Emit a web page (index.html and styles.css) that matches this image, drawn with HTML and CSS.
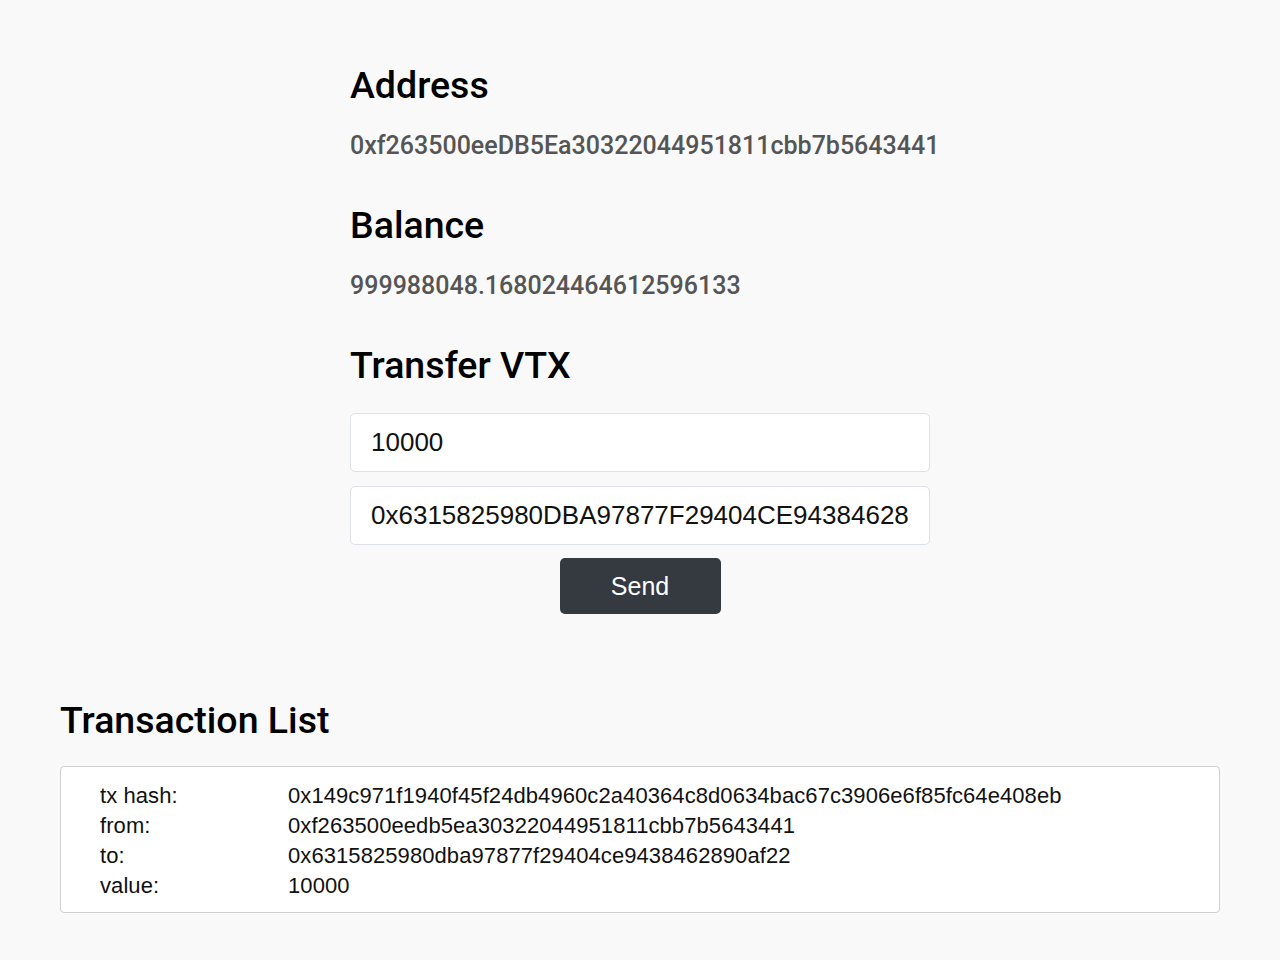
FILE: index.html
```html
<!DOCTYPE html>
<html lang="en">
<head>
<meta charset="utf-8">
<title>Wallet</title>
<link rel="stylesheet" href="styles.css">
</head>
<body>
<main class="page">
  <section class="wallet">
    <h2 class="heading">Address</h2>
    <p class="value">0xf263500eeDB5Ea30322044951811cbb7b5643441</p>
    <h2 class="heading spaced">Balance</h2>
    <p class="value">999988048.168024464612596133</p>
    <h2 class="heading spaced">Transfer VTX</h2>
    <form class="transfer">
      <input class="field" type="text" value="10000">
      <input class="field" type="text" value="0x6315825980DBA97877F29404CE9438462890af22">
      <button class="send" type="button">Send</button>
    </form>
  </section>
  <section class="transactions">
    <h2 class="heading">Transaction List</h2>
    <div class="tx-box">
      <div class="tx-row"><span class="tx-label">tx hash:</span><span class="tx-val">0x149c971f1940f45f24db4960c2a40364c8d0634bac67c3906e6f85fc64e408eb</span></div>
      <div class="tx-row"><span class="tx-label">from:</span><span class="tx-val">0xf263500eedb5ea30322044951811cbb7b5643441</span></div>
      <div class="tx-row"><span class="tx-label">to:</span><span class="tx-val">0x6315825980dba97877f29404ce9438462890af22</span></div>
      <div class="tx-row"><span class="tx-label">value:</span><span class="tx-val">10000</span></div>
    </div>
  </section>
</main>
</body>
</html>
```
FILE: styles.css
```css
html, body {
  margin: 0;
  padding: 0;
  background: #f9f9f9;
}
.page {
  padding-top: 63px;
  font-family: Roboto, "Liberation Sans", sans-serif;
}
.wallet {
  width: 580px;
  margin: 0 auto;
}
.heading {
  margin: 0;
  font-family: Roboto, sans-serif;
  font-weight: 500;
  font-size: 37.5px;
  line-height: 44px;
  color: #000;
}
.heading.spaced {
  margin-top: 42px;
}
.value {
  margin: 24px 0 0;
  font-family: Roboto, sans-serif;
  font-weight: 500;
  font-size: 25px;
  line-height: 30px;
  color: #555;
}
.transfer {
  margin-top: 26px;
  display: flex;
  flex-direction: column;
  align-items: center;
  gap: 14px;
}
.field {
  box-sizing: border-box;
  width: 100%;
  height: 59px;
  padding: 0 20px;
  border: 1px solid #dfe2e6;
  border-radius: 5px;
  background: #fff;
  font-family: "Liberation Sans", Arial, sans-serif;
  font-size: 26px;
  color: #111;
  outline: none;
}
.send {
  margin-top: -1px;
  width: 161px;
  height: 56px;
  border: none;
  border-radius: 5px;
  background: #343a40;
  color: #fff;
  font-family: "Liberation Sans", Arial, sans-serif;
  font-size: 25px;
  cursor: pointer;
}
.transactions {
  margin: 84px 60px 0;
  padding-bottom: 40px;
}
.tx-box {
  margin-top: 24px;
  background: #fff;
  border: 1px solid #cfcfcf;
  border-radius: 4px;
  padding: 14px 39px 11px;
  font-family: "Liberation Sans", Arial, sans-serif;
  font-size: 22px;
  line-height: 30px;
  letter-spacing: 0.08px;
  color: #111;
}
.tx-row {
  display: flex;
}
.tx-label {
  width: 188px;
  flex: none;
}
```
